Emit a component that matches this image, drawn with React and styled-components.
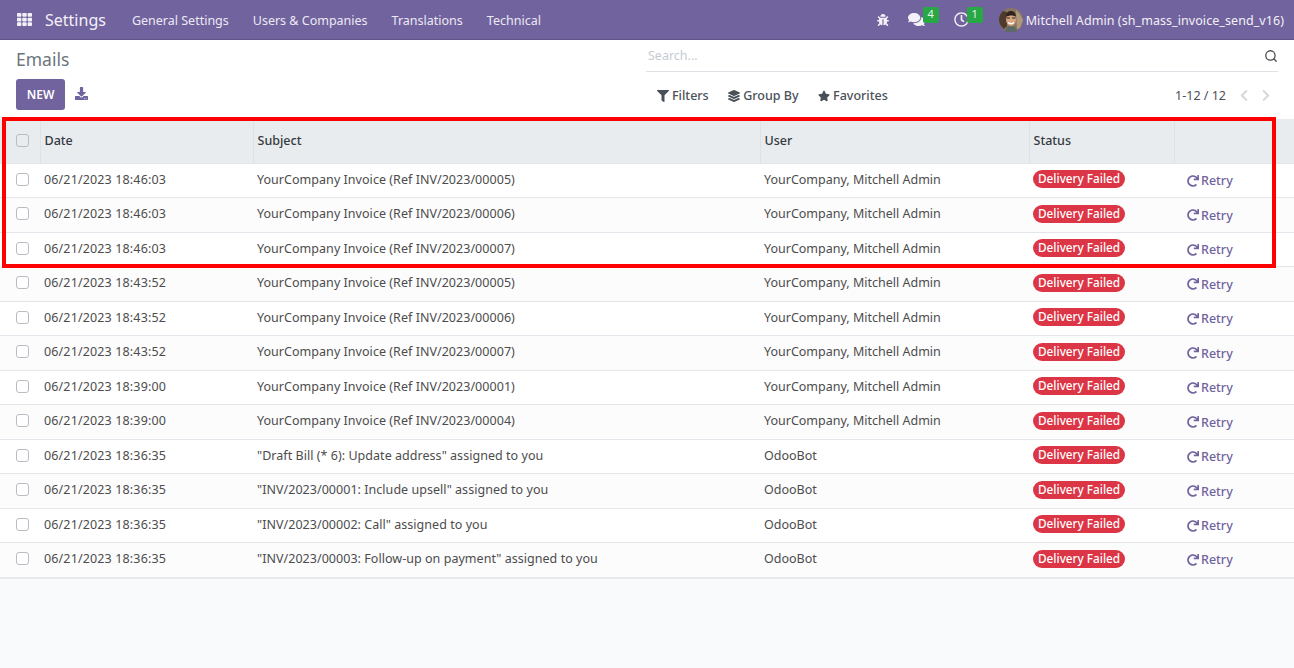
import React from "react";
import styled, { createGlobalStyle } from "styled-components";
import { FaBug, FaComments, FaDownload, FaFilter, FaLayerGroup, FaStar, FaRedo, FaTh, FaChevronLeft, FaChevronRight, FaRegClock } from "react-icons/fa";
import { Search } from "lucide-react";

const Global = createGlobalStyle`
  * { box-sizing: border-box; }
  html, body { margin: 0; height: 100%; }
  body {
    font-family: "Noto Sans", "Open Sans", sans-serif;
    font-size: 13px;
    color: #4c4c4c;
    background: #f9fafb;
  }
`;

const Page = styled.div`
  position: relative;
  width: 1294px;
  height: 668px;
  overflow: hidden;
  background: #f9fafb;
`;

const Navbar = styled.header`
  display: flex;
  align-items: center;
  height: 40px;
  padding: 0 10px 0 17px;
  background: #71639e;
  border-bottom: 1px solid #5f5387;
  color: #fff;
`;

const AppsIcon = styled(FaTh)`
  width: 15px;
  height: 15px;
  margin-right: 13px;
  color: #f3f1f7;
`;

const Brand = styled.span`
  font-size: 16px;
  margin-right: 26px;
  color: #f3f1f7;
`;

const MenuItem = styled.span`
  margin: 2px 24px 0 0;
  font-size: 12.5px;
  color: #ece9f3;
`;

const NavRight = styled.div`
  display: flex;
  align-items: center;
  margin-left: auto;
`;

const NavIcon = styled.span`
  position: relative;
  display: flex;
  align-items: center;
  height: 17px;
  margin-left: ${(p) => p.$gap}px;
  color: #f3f1f7;
`;

const Badge = styled.span`
  position: absolute;
  top: -4px;
  right: -14px;
  min-width: 16px;
  height: 16px;
  padding: 0 4px;
  border-radius: 2px;
  background: #28a745;
  color: #e8f5ea;
  font-size: 11px;
  line-height: 14px;
  text-align: center;
`;

const Avatar = styled.svg`
  width: 24px;
  height: 24px;
  margin-left: 30px;
  margin-right: 3px;
`;

const UserName = styled.span`
  margin-top: 2px;
  font-size: 12.5px;
  letter-spacing: 0.07px;
  color: #f3f1f7;
`;

const ControlPanel = styled.section`
  display: grid;
  grid-template-columns: 630px 1fr;
  height: 79px;
  padding-left: 16px;
  background: #fff;
`;

const PanelLeft = styled.div`
  display: flex;
  flex-direction: column;
`;

const Title = styled.h1`
  margin: 8px 0 9px;
  font-size: 17.5px;
  line-height: 22px;
  font-weight: 400;
  color: #6c757d;
`;

const Actions = styled.div`
  display: flex;
  align-items: center;
`;

const NewButton = styled.button`
  width: 49px;
  height: 31px;
  border: 0;
  border-radius: 3px;
  background: #71639e;
  color: #fff;
  font: 600 12px "Noto Sans", sans-serif;
`;

const Export = styled(FaDownload)`
  width: 13px;
  height: 13px;
  margin: 0 0 3px 10px;
  color: #71639e;
`;

const PanelRight = styled.div`
  display: flex;
  flex-direction: column;
  padding-right: 16px;
`;

const SearchBar = styled.div`
  display: flex;
  align-items: center;
  justify-content: space-between;
  height: 32px;
  padding-left: 2px;
  border-bottom: 1px solid #dee2e6;
  color: #c6cad0;
  font-size: 12.5px;
`;

const SearchIcon = styled(Search)`
  width: 14px;
  height: 14px;
  color: #4c4c4c;
  stroke-width: 2.2;
`;

const FilterRow = styled.div`
  display: flex;
  align-items: center;
  height: 47px;
  padding-left: 11px;
`;

const FilterItem = styled.span`
  display: flex;
  align-items: center;
  gap: 3px;
  margin-right: 19.5px;
  font-size: 12.5px;
  font-weight: 500;
  color: #495057;
  svg { width: 12px; height: 12px; }
`;

const Pager = styled.div`
  display: flex;
  align-items: center;
  margin-left: auto;
  padding-right: 8px;
  font-size: 12.5px;
  color: #495057;
`;

const PagerArrow = styled.span`
  display: flex;
  margin-left: 14px;
  color: #d5d8dc;
  svg { width: 8px; height: 13px; }
`;

const Table = styled.table`
  width: 1294px;
  table-layout: fixed;
  border-collapse: collapse;
  background: #fff;
  border-bottom: 2px solid #e7e9ed;
`;

const HeadCell = styled.th`
  height: 44px;
  padding: 0 4px 1px;
  background: #e9ecef;
  border-right: 1px solid #dee2e6;
  text-align: left;
  font-size: 12.5px;
  font-weight: 500;
  color: #343a40;
  &:last-child { border-right: 0; }
`;

const Row = styled.tr`
  height: 34.5px;
  border-top: 1px solid #e3e6ea;
  background: ${(p) => (p.$odd ? "#fcfcfd" : "#fff")};
  &:last-child { height: 35.5px; }
  &:last-child td { padding-bottom: 3px; }
`;

const Cell = styled.td`
  padding: 0 4px 2px;
  font-size: 12.5px;
  letter-spacing: ${(p) => p.$spacing || 0}px;
  color: #4c4c4c;
  white-space: nowrap;
`;

const CheckCell = styled.div`
  display: flex;
  justify-content: center;
`;

const Check = styled.span`
  display: block;
  width: 13px;
  height: 13px;
  margin-left: 5px;
  border: 1px solid #b9bdc3;
  border-radius: 3px;
  background: ${(p) => (p.$head ? "#e9ecef" : "#fff")};
`;

const Status = styled.span`
  display: inline-block;
  height: 18px;
  padding: 0 5px;
  border-radius: 9px;
  background: #dc3545;
  color: #fff;
  font-size: 11.75px;
  font-weight: 500;
  line-height: 17px;
`;

const Retry = styled.span`
  display: inline-flex;
  align-items: center;
  gap: 2px;
  margin-left: 9px;
  color: #71639e;
  font-weight: 500;
  font-size: 12.5px;
  position: relative;
  top: 2px;
  svg { width: 12px; height: 12px; }
`;

const Highlight = styled.div`
  position: absolute;
  left: 2px;
  top: 117px;
  width: 1274px;
  height: 151px;
  border: 4px solid #ff0000;
  pointer-events: none;
`;

const inv = "YourCompany Invoice (Ref INV/2023/";
const admin = "YourCompany, Mitchell Admin";
const rows = [
  ["06/21/2023 18:46:03", `${inv}00005)`, admin],
  ["06/21/2023 18:46:03", `${inv}00006)`, admin],
  ["06/21/2023 18:46:03", `${inv}00007)`, admin],
  ["06/21/2023 18:43:52", `${inv}00005)`, admin],
  ["06/21/2023 18:43:52", `${inv}00006)`, admin],
  ["06/21/2023 18:43:52", `${inv}00007)`, admin],
  ["06/21/2023 18:39:00", `${inv}00001)`, admin],
  ["06/21/2023 18:39:00", `${inv}00004)`, admin],
  ["06/21/2023 18:36:35", `"Draft Bill (* 6): Update address" assigned to you`, "OdooBot"],
  ["06/21/2023 18:36:35", `"INV/2023/00001: Include upsell" assigned to you`, "OdooBot"],
  ["06/21/2023 18:36:35", `"INV/2023/00002: Call" assigned to you`, "OdooBot"],
  ["06/21/2023 18:36:35", `"INV/2023/00003: Follow-up on payment" assigned to you`, "OdooBot"],
];

export default function App() {
  return (
    <Page>
      <Global />
      <Navbar>
        <AppsIcon />
        <Brand>Settings</Brand>
        <MenuItem>General Settings</MenuItem>
        <MenuItem>Users &amp; Companies</MenuItem>
        <MenuItem>Translations</MenuItem>
        <MenuItem>Technical</MenuItem>
        <NavRight>
          <NavIcon $gap={0}><FaBug size={12} /></NavIcon>
          <NavIcon $gap={19}><FaComments size={17} /><Badge>4</Badge></NavIcon>
          <NavIcon $gap={29}><FaRegClock size={15} /><Badge>1</Badge></NavIcon>
          <Avatar viewBox="0 0 24 24">
            <circle cx="12" cy="12" r="12" fill="#8a7660" />
            <path d="M0 12a12 12 0 0 0 5 9l3-3V4L4 3a12 12 0 0 0-4 9z" fill="#4f3b2c" />
            <path d="M17 2l3 3 4 7-3 8-3 1z" fill="#b09a7c" />
            <path d="M6 24c1-5 3-6 6-6s5 1 6 5a12 12 0 0 1-12 1z" fill="#5d6a68" />
            <ellipse cx="12" cy="11" rx="5" ry="7" fill="#d8a583" />
            <path d="M7 9c0-5 3-6 5-6s5 1 5 6c-2-2-7-2-10 0z" fill="#2f241d" />
            <path d="M7.500 10h3.500M13 10h3.500" stroke="#2f241d" strokeWidth="1" />
            <path d="M9 14.500c2 1.500 4 1.500 6 0" stroke="#fff" strokeWidth="1.200" fill="none" />
          </Avatar>
          <UserName>Mitchell Admin (sh_mass_invoice_send_v16)</UserName>
        </NavRight>
      </Navbar>

      <ControlPanel>
        <PanelLeft>
          <Title>Emails</Title>
          <Actions>
            <NewButton>NEW</NewButton>
            <Export />
          </Actions>
        </PanelLeft>
        <PanelRight>
          <SearchBar>
            Search...
            <SearchIcon />
          </SearchBar>
          <FilterRow>
            <FilterItem><FaFilter />Filters</FilterItem>
            <FilterItem><FaLayerGroup />Group By</FilterItem>
            <FilterItem><FaStar />Favorites</FilterItem>
            <Pager>
              1-12 / 12
              <PagerArrow><FaChevronLeft /></PagerArrow>
              <PagerArrow><FaChevronRight /></PagerArrow>
            </Pager>
          </FilterRow>
        </PanelRight>
      </ControlPanel>

      <Table>
        <colgroup>
          <col style={{ width: 40 }} />
          <col style={{ width: 213 }} />
          <col style={{ width: 507 }} />
          <col style={{ width: 269 }} />
          <col style={{ width: 145 }} />
          <col />
        </colgroup>
        <thead>
          <tr>
            <HeadCell><CheckCell><Check $head /></CheckCell></HeadCell>
            <HeadCell>Date</HeadCell>
            <HeadCell>Subject</HeadCell>
            <HeadCell>User</HeadCell>
            <HeadCell>Status</HeadCell>
            <HeadCell />
          </tr>
        </thead>
        <tbody>
          {rows.map((r, i) => (
            <Row key={i} $odd={i % 2 === 1}>
              <Cell><CheckCell><Check /></CheckCell></Cell>
              <Cell $spacing={0.14}>{r[0]}</Cell>
              <Cell $spacing={0.04}>{r[1]}</Cell>
              <Cell>{r[2]}</Cell>
              <Cell><Status>Delivery Failed</Status></Cell>
              <Cell><Retry><FaRedo />Retry</Retry></Cell>
            </Row>
          ))}
        </tbody>
      </Table>

      <Highlight />
    </Page>
  );
}
